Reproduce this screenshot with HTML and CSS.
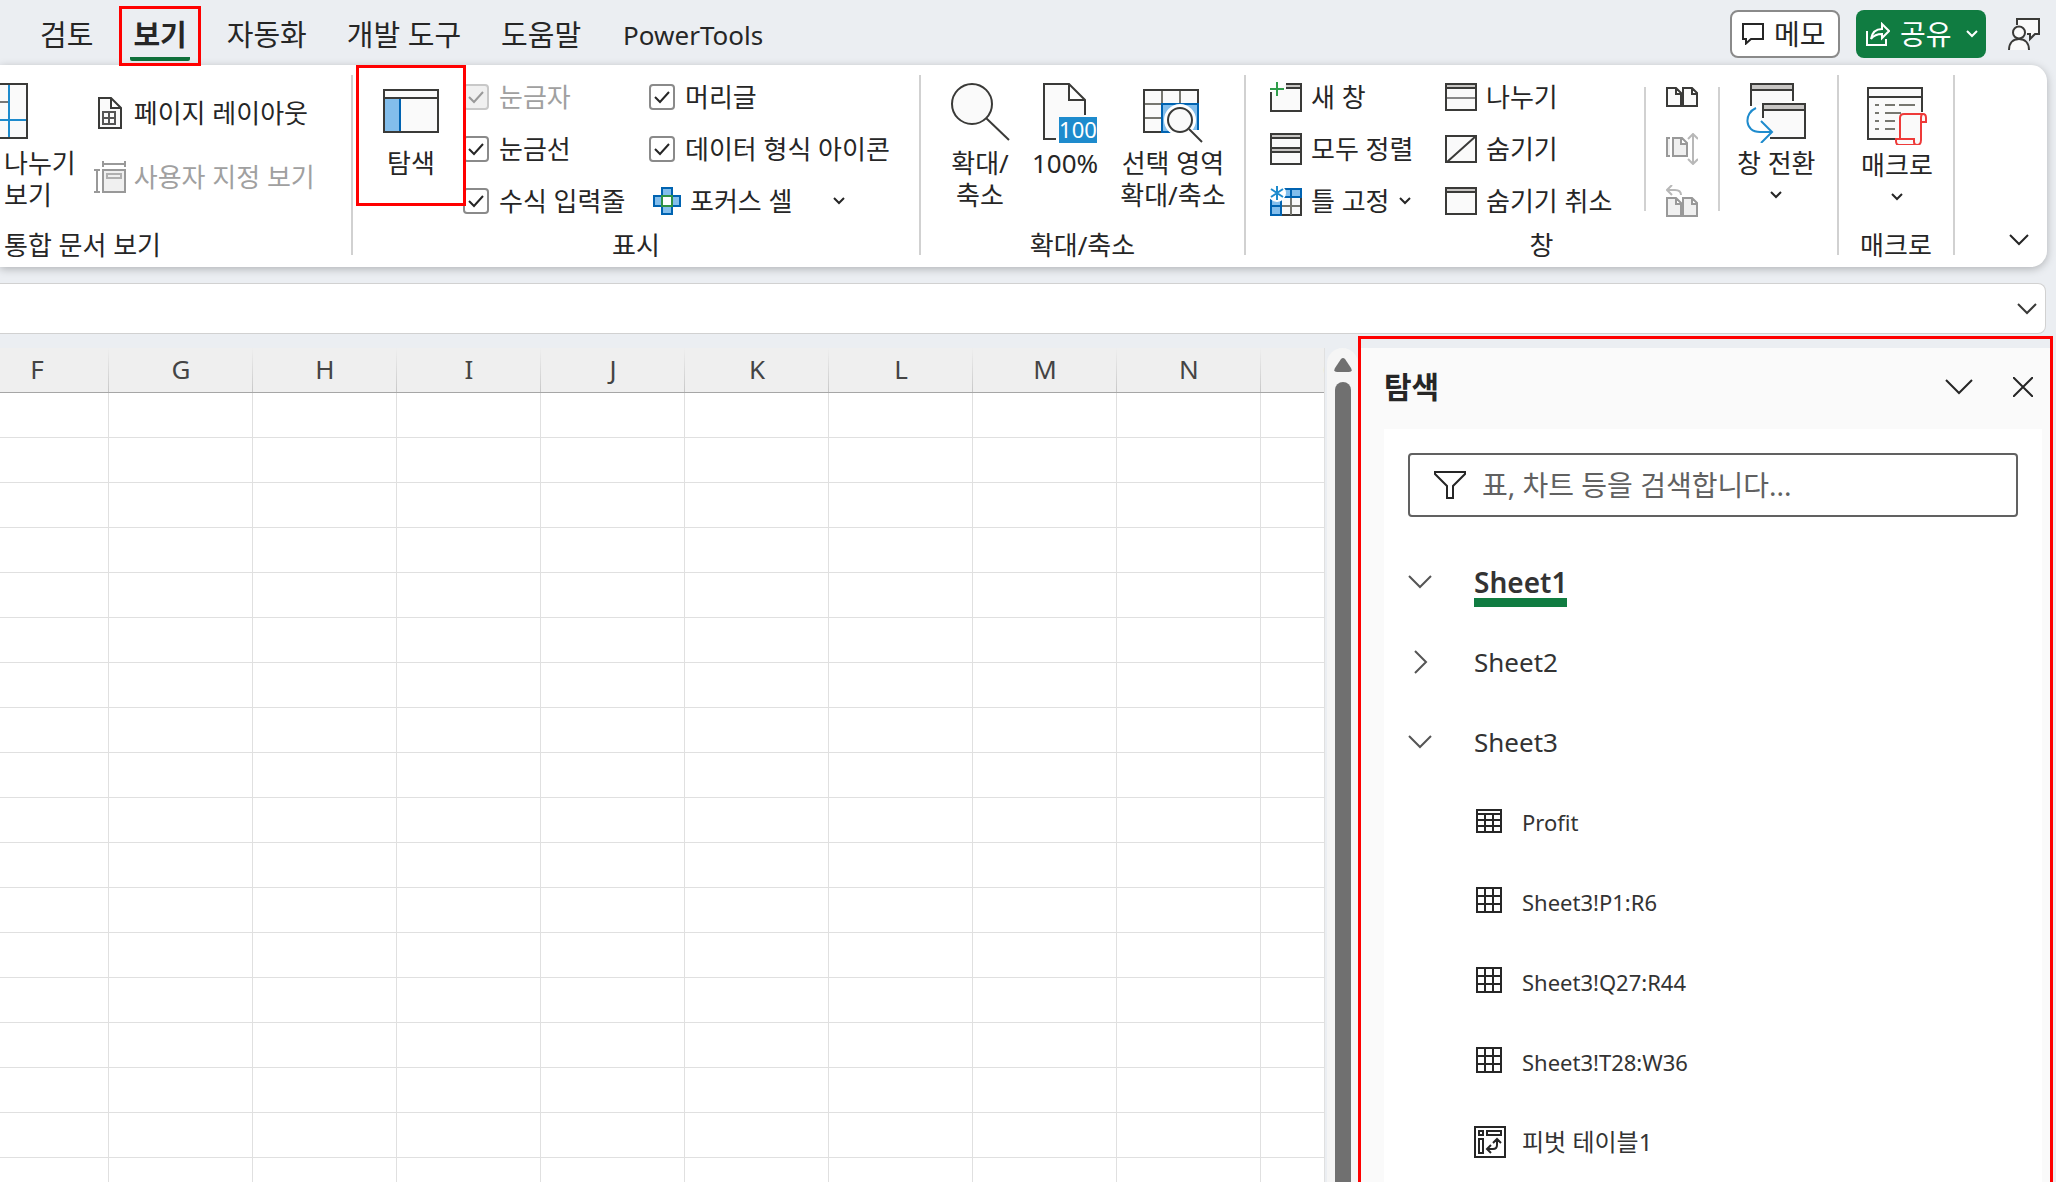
FILE: index.html
```
<!DOCTYPE html>
<html lang="ko">
<head>
    <meta charset="UTF-8">
    <meta name="viewport" content="width=device-width, initial-scale=1.0">
    <title>Excel - 탐색</title>
    <link rel="stylesheet" href="styles.css">
</head>
<body>

    <header class="topbar">
        <nav class="tabs">
            <button class="tab">검토</button>
            <button class="tab active"><span>보기</span></button>
            <button class="tab">자동화</button>
            <button class="tab">개발 도구</button>
            <button class="tab">도움말</button>
            <button class="tab latin">PowerTools</button>
        </nav>
        <div class="actions">
            <button class="memo">
                <svg width="22" height="22" viewBox="0 0 22 22" fill="none" stroke="#262626" stroke-width="2"><path d="M1 1h20v15H9l-5 4.500V16H1z"/></svg>
                메모
            </button>
            <button class="share">
                <svg width="24" height="24" viewBox="0 0 24 24" fill="none" stroke="#fff" stroke-width="2"><path d="M1 9v14h19v-6M5 17c1-6 4-10 11-10V2l7 7-7 7v-4c-5 0-8 1-11 5z"/></svg>
                공유
                <svg class="share-arrow" width="12" height="8" viewBox="0 0 12 8" fill="none" stroke="#fff" stroke-width="2"><path d="M1 1l5 5 5-5"/></svg>
            </button>
            <button class="present" aria-label="프레젠테이션">
                <svg width="32" height="32" viewBox="0 0 32 32" fill="#fafafa" stroke="#3a3a38" stroke-width="2"><path d="M9 7V1h22v15h-4l-5 5v-5h-3"/><circle cx="11" cy="14.500" r="6"/><path d="M1 32c0-7 4-11 10-11s10 4 10 11"/></svg>
            </button>
        </div>
    </header>

    <section class="ribbon">
        <!-- Workbook views -->
        <div class="group views">
            <div class="group-body">
                <button class="big page-break">
                    <svg width="28" height="56" viewBox="0 0 28 56" fill="#fafafa" stroke="#3a3a38" stroke-width="2"><path d="M-2 1h29v54H-2z"/><path d="M0 19h9" stroke="#777"/><path d="M9 2v52M0 37h26" stroke="#1e8bcd"/></svg>
                    <span>나누기<br>보기</span>
                </button>
                <div class="view-list">
                    <button class="small">
                        <svg width="34" height="32" viewBox="0 0 34 32" fill="#fafafa" stroke="#3a3a38" stroke-width="2"><path d="M5 1h12l10 10v20H5zM17 1v10h10"/><path d="M9 15h12v12H9zM15 15v12M9 21h12" stroke="#555"/></svg>
                        페이지 레이아웃
                    </button>
                    <button class="small" disabled>
                        <svg width="34" height="32" viewBox="0 0 34 32" fill="#f0f0f0" stroke="#999" stroke-width="2"><path d="M9 9h22v22H9zM9 0v6M31 0v6M9 3h22M0 9h6M0 31h6M3 9v22"/><path d="M13 13h14v4H13z" stroke="#b0b0b0"/></svg>
                        사용자 지정 보기
                    </button>
                </div>
            </div>
            <div class="group-label start">통합 문서 보기</div>
        </div>
        <div class="divider"></div>

        <!-- Show -->
        <div class="group show">
            <div class="group-body">
                <button class="big navigation">
                    <svg width="56" height="44" viewBox="0 0 56 44" fill="#fafafa" stroke="#3a3a38" stroke-width="2"><path d="M1 1h54v42H1z"/><path d="M2 10h14v32H2z" fill="#83beec" stroke="none"/><path d="M17 10v32" stroke="#0063b1"/><path d="M1 9h54"/></svg>
                    <span>탐색</span>
                </button>
                <div class="checks">
                    <label class="check off"><input type="checkbox" checked disabled>눈금자</label>
                    <label class="check"><input type="checkbox" checked>머리글</label>
                    <label class="check"><input type="checkbox" checked>눈금선</label>
                    <label class="check"><input type="checkbox" checked>데이터 형식 아이콘</label>
                    <label class="check"><input type="checkbox" checked>수식 입력줄</label>
                    <button class="small focus-cell">
                        <svg width="28" height="28" viewBox="0 0 28 28" fill="#83beec" stroke="#0063b1" stroke-width="2"><path d="M9 1h10v8h8v10h-8v8H9v-8H1V9h8z"/><path d="M9 9h10v10H9z" fill="#fff" stroke="#2f9245"/></svg>
                        포커스 셀
                        <svg class="focus-arrow" width="12" height="8" viewBox="0 0 12 8" fill="none" stroke="#262626" stroke-width="2"><path d="M1 1l5 5 5-5"/></svg>
                    </button>
                </div>
            </div>
            <div class="group-label">표시</div>
        </div>
        <div class="divider"></div>

        <!-- Zoom -->
        <div class="group zoom">
            <div class="group-body">
                <button class="big">
                    <svg width="60" height="60" viewBox="0 0 60 60" fill="#fafafa" stroke="#3a3a38" stroke-width="2"><circle cx="22" cy="21" r="20"/><path d="M36 35l23 22"/></svg>
                    <span>확대/<br>축소</span>
                </button>
                <button class="big actual-size">
                    <svg width="56" height="60" viewBox="0 0 56 60" fill="#fafafa" stroke="#3a3a38" stroke-width="2"><path d="M14 56H2V1h25l16 16v15M27 1v16h16"/><path d="M17 34h38v26H17z" fill="#1e8bcd" stroke="none"/><text x="36" y="55" class="badge-text" text-anchor="middle">100</text></svg>
                    <span>100%</span>
                </button>
                <button class="big">
                    <svg width="60" height="60" viewBox="0 0 60 60" fill="#fafafa" stroke="#3a3a38" stroke-width="2"><path d="M1 7h54v42H1z"/><path d="M19 8v40M37 8v40M2 21h52M2 35h52" stroke="#777770"/><path d="M19 21h36v28H19z" fill="#83beec" stroke="#0063b1"/><circle cx="37" cy="37" r="16" fill="#fff" stroke="none"/><path d="M44 47h12v4H44z" fill="#fff" stroke="none"/><circle cx="37" cy="37" r="12"/><path d="M46 46l13 13"/></svg>
                    <span>선택 영역<br>확대/축소</span>
                </button>
            </div>
            <div class="group-label">확대/축소</div>
        </div>
        <div class="divider"></div>

        <!-- Window -->
        <div class="group window">
            <div class="group-body">
                <div class="commands">
                    <button class="small">
                        <svg width="32" height="32" viewBox="0 0 32 32" fill="#fafafa" stroke="#3a3a38" stroke-width="2"><path d="M1 11v19h30V3H16"/><path d="M16 5h14" stroke="#c8c6c4"/><path d="M16 7h14"/><path d="M7 1v14M0 8h14" stroke="#2f9e4b"/></svg>
                        새 창
                    </button>
                    <button class="small">
                        <svg width="32" height="28" viewBox="0 0 32 28" fill="#fafafa" stroke="#3a3a38" stroke-width="2"><path d="M1 1h30v26H1z"/><path d="M2 3h28" stroke="#c8c6c4"/><path d="M1 5h30"/><path d="M2 15h28" stroke="#888"/></svg>
                        나누기
                    </button>
                    <button class="small">
                        <svg width="32" height="32" viewBox="0 0 32 32" fill="#fafafa" stroke="#3a3a38" stroke-width="2"><path d="M1 1h30v30H1z"/><path d="M2 3h28M2 17h28" stroke="#c8c6c4"/><path d="M1 5h30M1 15h30M1 19h30"/></svg>
                        모두 정렬
                    </button>
                    <button class="small">
                        <svg width="32" height="28" viewBox="0 0 32 28" fill="#fafafa" stroke="#3a3a38" stroke-width="2"><path d="M1 1h30v26H1zM2 27L31 1"/></svg>
                        숨기기
                    </button>
                    <button class="small">
                        <svg width="32" height="32" viewBox="0 0 32 32" fill="#fafafa" stroke="#3a3a38" stroke-width="2"><path d="M1 4h30v26H1z"/><path d="M21 12v18M12 21h18" stroke="#777770"/><path d="M12 4h19v8H12zM21 4v8M1 12h10v18H1zM1 21h10" fill="#83beec" stroke="#0063b1"/><circle cx="7" cy="8" r="9" fill="#fff" stroke="none"/><path d="M7 1v14M1 4l12 8M13 4L1 12" stroke="#1e8bcd"/></svg>
                        틀 고정
                        <svg width="12" height="8" viewBox="0 0 12 8" fill="none" stroke="#262626" stroke-width="2"><path d="M1 1l5 5 5-5"/></svg>
                    </button>
                    <button class="small">
                        <svg width="32" height="28" viewBox="0 0 32 28" fill="#fafafa" stroke="#3a3a38" stroke-width="2"><path d="M1 1h30v26H1z"/><path d="M2 3h28" stroke="#c8c6c4"/><path d="M1 5h30"/></svg>
                        숨기기 취소
                    </button>
                </div>
                <div class="divider short"></div>
                <div class="compare">
                    <button class="icon-only" aria-label="나란히 보기">
                        <svg width="32" height="20" viewBox="0 0 32 20" fill="#fafafa" stroke="#3a3a38" stroke-width="2"><path d="M1 1h9l5 5v13H1zM17 1h9l5 5v13H17zM10 1v6h5M26 1v6h5"/></svg>
                    </button>
                    <button class="icon-only" aria-label="동시 스크롤" disabled>
                        <svg width="32" height="32" viewBox="0 0 32 32" fill="#f0f0f0" stroke="#999" stroke-width="2"><path d="M4 5H1v18h3M7 5h9l5 5v13H7zM15 5v6h6"/><path d="M27 2v28M22 6l5-5 5 5M22 26l5 5 5-5" fill="none" stroke="#b8b8b8"/></svg>
                    </button>
                    <button class="icon-only" aria-label="창 위치 다시 정렬" disabled>
                        <svg width="32" height="32" viewBox="0 0 32 32" fill="#f0f0f0" stroke="#999" stroke-width="2"><path d="M1 13h9l5 5v13H1zM17 13h9l5 5v13H17zM10 13v6h5M26 13v6h5"/><path d="M6 0L1 5l5 5M1 5h8c4 0 6 2 6 5" fill="none" stroke="#b8b8b8"/></svg>
                    </button>
                </div>
                <div class="divider short"></div>
                <button class="big switch">
                    <svg width="60" height="60" viewBox="0 0 60 60" fill="#fafafa" stroke="#3a3a38" stroke-width="2"><path d="M5 23V1h42v17"/><path d="M6 4h40" stroke="#c8c6c4" stroke-width="4"/><path d="M5 7h42"/><path d="M17 35V21h42v34H24"/><path d="M18 24h40" stroke="#c8c6c4" stroke-width="4"/><path d="M17 27h42"/><path d="M10 25C-2 30-2 49 14 49h11M15 38l11 11-11 11" fill="none" stroke="#1e8bcd"/></svg>
                    <span>창 전환</span>
                    <svg width="12" height="8" viewBox="0 0 12 8" fill="none" stroke="#262626" stroke-width="2"><path d="M1 1l5 5 5-5"/></svg>
                </button>
            </div>
            <div class="group-label">창</div>
        </div>
        <div class="divider"></div>

        <!-- Macros -->
        <div class="group macros">
            <div class="group-body">
                <button class="big">
                    <svg width="60" height="60" viewBox="0 0 60 60" fill="#fafafa" stroke="#3a3a38" stroke-width="2"><path d="M29 54H1V3h54v24M1 12h54"/><path d="M8 20h4M18 20h10M32 20h16M8 28h4M18 28h16M8 36h4M18 36h10M8 44h4M18 44h10" stroke="#777770"/><path d="M33 53V33c0-3 1-4 4-4h19c2 0 3 2 3 4v4h-5v18c0 3-1 5-4 5H32c-2 0-3-2-3-4v-2h18v3c0 2 1 3 3 3M54 37v-4c0-2 0-4 2-4" stroke="#ee3a39"/></svg>
                    <span>매크로</span>
                    <svg width="12" height="8" viewBox="0 0 12 8" fill="none" stroke="#262626" stroke-width="2"><path d="M1 1l5 5 5-5"/></svg>
                </button>
            </div>
            <div class="group-label">매크로</div>
        </div>
        <div class="divider"></div>
        <button class="collapse" aria-label="리본 접기">
            <svg width="20" height="12" viewBox="0 0 20 12" fill="none" stroke="#262626" stroke-width="2"><path d="M1 1l9 9 9-9"/></svg>
        </button>
    </section>

    <div class="formula-bar">
        <input type="text" class="formula" aria-label="수식 입력줄">
        <button class="expand" aria-label="수식 입력줄 확장">
            <svg width="20" height="12" viewBox="0 0 20 12" fill="none" stroke="#3a3a38" stroke-width="2"><path d="M1 1l9 9 9-9"/></svg>
        </button>
    </div>

    <main class="workspace">
        <div class="sheet">
            <table class="cells">
                <thead>
                    <tr><th>F</th><th>G</th><th>H</th><th>I</th><th>J</th><th>K</th><th>L</th><th>M</th><th>N</th><th>O</th></tr>
                </thead>
                <tbody id="rows"></tbody>
            </table>
        </div>
        <div class="scrollbar">
            <svg width="18" height="14" viewBox="0 0 18 14" fill="#707070"><path d="M7 1q2-2 4 0l6 9q2 4-2 4H3q-4 0-2-4z"/></svg>
            <div class="thumb"></div>
        </div>
        <aside class="pane">
            <div class="pane-head">
                <h2>탐색</h2>
                <button aria-label="옵션"><svg width="28" height="16" viewBox="0 0 28 16" fill="none" stroke="#262626" stroke-width="2"><path d="M1 1l13 13L27 1"/></svg></button>
                <button aria-label="닫기"><svg width="20" height="20" viewBox="0 0 20 20" fill="none" stroke="#262626" stroke-width="2"><path d="M0 0l20 20M20 0L0 20"/></svg></button>
            </div>
            <div class="pane-body">
                <label class="search">
                    <svg width="32" height="28" viewBox="0 0 32 28" fill="none" stroke="#262626" stroke-width="2"><path d="M1 1h30v2L19 15v12h-6V15L1 3z"/></svg>
                    <input type="text" placeholder="표, 차트 등을 검색합니다..." aria-label="검색">
                </label>
                <ul class="tree">
                    <li class="node current">
                        <button aria-label="접기"><svg width="24" height="14" viewBox="0 0 24 14" fill="none" stroke="#555" stroke-width="2"><path d="M1 1l11 11L23 1"/></svg></button>
                        <a href="#sheet1">Sheet1</a>
                    </li>
                    <li class="node">
                        <button aria-label="펼치기"><svg width="24" height="24" viewBox="0 0 24 24" fill="none" stroke="#555" stroke-width="2"><path d="M7 1l11 11L7 23"/></svg></button>
                        <a href="#sheet2">Sheet2</a>
                    </li>
                    <li class="node">
                        <button aria-label="접기"><svg width="24" height="14" viewBox="0 0 24 14" fill="none" stroke="#555" stroke-width="2"><path d="M1 1l11 11L23 1"/></svg></button>
                        <a href="#sheet3">Sheet3</a>
                    </li>
                    <li class="leaf">
                        <svg width="32" height="32" viewBox="0 0 32 32" fill="none" stroke="#262626" stroke-width="2"><path d="M3 4h24v22H3zM3 8h24M3 14h24M3 20h24M11 8v18M19 8v18"/></svg>
                        <a href="#profit">Profit</a>
                    </li>
                    <li class="leaf">
                        <svg width="32" height="32" viewBox="0 0 32 32" fill="none" stroke="#262626" stroke-width="2"><path d="M3 2h24v24H3zM3 10h24M3 18h24M11 2v24M19 2v24"/></svg>
                        <a href="#p1r6">Sheet3!P1:R6</a>
                    </li>
                    <li class="leaf">
                        <svg width="32" height="32" viewBox="0 0 32 32" fill="none" stroke="#262626" stroke-width="2"><path d="M3 2h24v24H3zM3 10h24M3 18h24M11 2v24M19 2v24"/></svg>
                        <a href="#q27r44">Sheet3!Q27:R44</a>
                    </li>
                    <li class="leaf">
                        <svg width="32" height="32" viewBox="0 0 32 32" fill="none" stroke="#262626" stroke-width="2"><path d="M3 2h24v24H3zM3 10h24M3 18h24M11 2v24M19 2v24"/></svg>
                        <a href="#t28w36">Sheet3!T28:W36</a>
                    </li>
                    <li class="leaf pivot">
                        <svg width="32" height="32" viewBox="0 0 32 32" fill="none" stroke="#262626" stroke-width="2"><path d="M1 1h30v30H1zM5 5h4v4H5zM13 5h14v4H13zM5 13h4v14H5zM23 14v5q0 4-4 4h-5M19 17l4-4 4 4M17 19l-4 4 4 4"/></svg>
                        <a href="#pivot1">피벗 테이블1</a>
                    </li>
                </ul>
            </div>
        </aside>
    </main>

    <script>
        // Fill the grid with empty cells under each column heading
        const rows = document.getElementById('rows');
        for (let i = 0; i < 18; i++) {
            rows.innerHTML += '<tr>' + '<td></td>'.repeat(10) + '</tr>';
        }
    </script>
</body>
</html>
```
FILE: styles.css
```
* {
    box-sizing: border-box;
}
body {
    margin: 0;
    height: 100vh;
    display: flex;
    flex-direction: column;
    overflow: hidden;
    background-color: #ebeef2;
    color: #262626;
    font-family: "Noto Sans", "Noto Sans CJK KR", sans-serif;
    font-size: 26px;
    line-height: 32px;
}
button {
    padding: 0;
    border: none;
    background: none;
    color: inherit;
    font: inherit;
    white-space: nowrap;
}
svg {
    display: block;
    flex-shrink: 0;
}

/* Tabs */
.topbar {
    display: flex;
    justify-content: space-between;
    height: 65px;
    padding: 6px 16px 0 20px;
    font-size: 29px;
}
.tabs {
    display: flex;
    align-items: flex-start;
}
.tab {
    height: 58px;
    padding: 0 20px;
}
.tab.latin {
    padding: 0 22px;
    font-size: 26px;
}
.tab.active {
    height: 60px;
    padding: 0 8px;
    margin: 0 6px;
    border: 3px solid #ff0000;
    font-weight: 700;
    z-index: 1;
}
.tab.active span {
    display: block;
    height: 50px;
    padding: 8px 3px 0;
    border-bottom: 4px solid #0f703b;
    border-radius: 2px;
}
.actions {
    display: flex;
    align-items: center;
    height: 48px;
    margin-top: 4px;
    gap: 16px;
    font-size: 28px;
}
.memo, .share {
    display: flex;
    align-items: center;
    height: 48px;
    border-radius: 8px;
    padding: 0 10px;
    gap: 10px;
}
.memo {
    width: 110px;
    border: 2px solid #8a8a8a;
    background-color: #fff;
}
.share {
    width: 130px;
    background-color: #107c41;
    color: #fff;
}
.share-arrow {
    margin-left: 4px;
}
.present {
    margin-left: 6px;
}

/* Ribbon */
.ribbon {
    display: flex;
    position: relative;
    margin-right: 9px;
    background-color: #fff;
    border-radius: 0 16px 16px 0;
    box-shadow: 0 2px 8px rgba(0, 0, 0, 0.25);
}
.group {
    display: flex;
    flex-direction: column;
    flex-shrink: 0;
}
.group-body {
    display: flex;
    height: 162px;
}
.group-label {
    height: 40px;
    padding-top: 2px;
    text-align: center;
}
.group-label.start {
    text-align: left;
    padding-left: 4px;
}
.divider {
    width: 2px;
    margin: 10px 0 12px;
    background-color: #d1d1d1;
}
.divider.short {
    margin: 22px 0 16px;
}
.big {
    display: flex;
    flex-direction: column;
    align-items: center;
    padding-top: 18px;
}
.big span {
    margin-top: 4px;
}
.small {
    display: flex;
    align-items: center;
    gap: 9px;
}
.small:disabled {
    color: #a0a0a0;
}

.views {
    width: 351px;
}
.page-break {
    align-items: flex-start;
    text-align: left;
}
.page-break span {
    margin-top: 8px;
    padding-left: 4px;
}
.view-list {
    display: flex;
    flex-direction: column;
    padding: 16px 0 0 18px;
}
.view-list .small {
    height: 64px;
    gap: 6px;
}

.show {
    width: 566px;
    padding-left: 3px;
}
.show .group-label {
    margin-left: -3px;
}
.navigation {
    width: 110px;
    height: 141px;
    padding-top: 21px;
    border: 3px solid #ff0000;
    z-index: 1;
}
.navigation span {
    margin-top: 14px;
}
.checks {
    display: grid;
    grid-template-columns: 186px auto;
    grid-auto-rows: 52px;
    padding-top: 6px;
    margin-left: -3px;
}
.check {
    display: flex;
    align-items: center;
    gap: 10px;
    white-space: nowrap;
}
.check.off {
    color: #a0a0a0;
}
.check input {
    appearance: none;
    flex-shrink: 0;
    width: 26px;
    height: 26px;
    margin: 0;
    border: 2px solid #8a8a8a;
    border-radius: 4px;
    background: #fff url("data:image/svg+xml,%3Csvg xmlns='http://www.w3.org/2000/svg' viewBox='0 0 22 22' fill='none' stroke='%23262626' stroke-width='2'%3E%3Cpath d='M4 11l5 5 9-10'/%3E%3C/svg%3E") center / 22px no-repeat;
}
.check input:disabled {
    border-color: #c8c8c8;
    background: #f0f0f0 url("data:image/svg+xml,%3Csvg xmlns='http://www.w3.org/2000/svg' viewBox='0 0 22 22' fill='none' stroke='%23999' stroke-width='2'%3E%3Cpath d='M4 11l5 5 9-10'/%3E%3C/svg%3E") center / 22px no-repeat;
}
.focus-cell {
    padding-left: 4px;
}
.focus-arrow {
    margin-left: 32px;
}

.zoom {
    width: 323px;
}
.zoom .group-body {
    padding-left: 29px;
    gap: 22px;
}
.actual-size {
    align-items: flex-end;
}
.badge-text {
    fill: #fff;
    stroke: none;
    font-size: 22px;
}

.window {
    width: 591px;
}
.window .group-body {
    padding-left: 24px;
}
.commands {
    display: grid;
    grid-template-columns: 175px 199px;
    grid-auto-rows: 52px;
    padding-top: 6px;
}
.compare {
    display: flex;
    flex-direction: column;
    padding: 6px 20px 0;
}
.icon-only {
    height: 52px;
}
.switch {
    margin-left: 17px;
}
.switch svg:last-child, .macros svg:last-child {
    margin-top: 12px;
}

.macros {
    width: 114px;
}
.macros .group-body {
    justify-content: center;
}
.macros .big {
    padding: 20px 0 0 2px;
}
.collapse {
    margin: auto 18px 21px auto;
}

/* Formula bar */
.formula-bar {
    display: flex;
    align-items: center;
    height: 51px;
    margin: 16px 10px 2px 0;
    padding-right: 8px;
    border: 1px solid #d1d1d1;
    border-left: none;
    border-radius: 0 8px 8px 0;
    background-color: #fff;
}
.formula {
    flex: 1;
    height: 48px;
    border: none;
    background: none;
    font: inherit;
}

/* Grid */
.workspace {
    flex: 1;
    display: flex;
    min-height: 0;
}
.sheet {
    flex: 1;
    min-width: 0;
    margin-top: 12px;
    overflow: hidden;
    background-color: #fff;
    border-right: 1px solid #e0e0e0;
}
.cells {
    width: 1440px;
    margin-left: -35px;
    table-layout: fixed;
    border-collapse: separate;
    border-spacing: 0;
}
.cells th {
    height: 45px;
    padding: 0 0 2px;
    border-bottom: 1px solid #a6a6a6;
    background: linear-gradient(#efefef, #c8c8c8) right / 1px 100% no-repeat #efefef;
    color: #444;
    font-weight: 400;
}
.cells td {
    height: 45px;
    padding: 0;
    border-right: 1px solid #e0e0e0;
    border-bottom: 1px solid #e0e0e0;
}
.scrollbar {
    display: flex;
    flex-direction: column;
    align-items: center;
    width: 31px;
    margin: 12px 0 0 2px;
    padding-top: 10px;
    gap: 10px;
    border-radius: 16px 16px 0 0;
    background-color: #f5f5f5;
}
.thumb {
    flex: 1;
    width: 16px;
    border-radius: 8px 8px 0 0;
    background-color: #707070;
}

/* Navigation pane */
.pane {
    display: flex;
    flex-direction: column;
    width: 695px;
    margin-right: 3px;
    padding-top: 9px;
    border: 3px solid #ff0000;
    border-bottom: none;
}
.pane-head {
    display: flex;
    align-items: center;
    flex-shrink: 0;
    height: 81px;
    padding: 0 17px 4px 23px;
    gap: 40px;
    background-color: #fafafa;
}
.pane-head h2 {
    flex: 1;
    margin: 0;
    font-size: 30px;
}
.pane-body {
    flex: 1;
    min-height: 0;
    overflow: hidden;
    padding: 24px 24px 0;
    border: solid #fafafa;
    border-width: 0 8px 0 23px;
    background-color: #fff;
}
.search {
    display: flex;
    align-items: center;
    height: 64px;
    padding-left: 24px;
    gap: 16px;
    border: 2px solid #616161;
    border-radius: 4px;
}
.search input {
    flex: 1;
    padding: 0;
    border: none;
    outline: none;
    font: inherit;
    font-size: 28px;
}
.search input::placeholder {
    color: #616161;
}
.tree {
    margin: 25px 0 0;
    padding: 0;
    list-style: none;
}
.tree a {
    color: #333;
    text-decoration: none;
}
.node, .leaf {
    display: flex;
    align-items: center;
    height: 80px;
}
.node {
    gap: 42px;
}
.node.current a {
    padding-top: 9px;
    border-bottom: 9px solid #107c41;
    font-size: 28px;
    font-weight: 600;
}
.leaf {
    padding-left: 66px;
    gap: 16px;
    font-size: 22px;
}
.leaf.pivot {
    font-size: 24px;
}
```
